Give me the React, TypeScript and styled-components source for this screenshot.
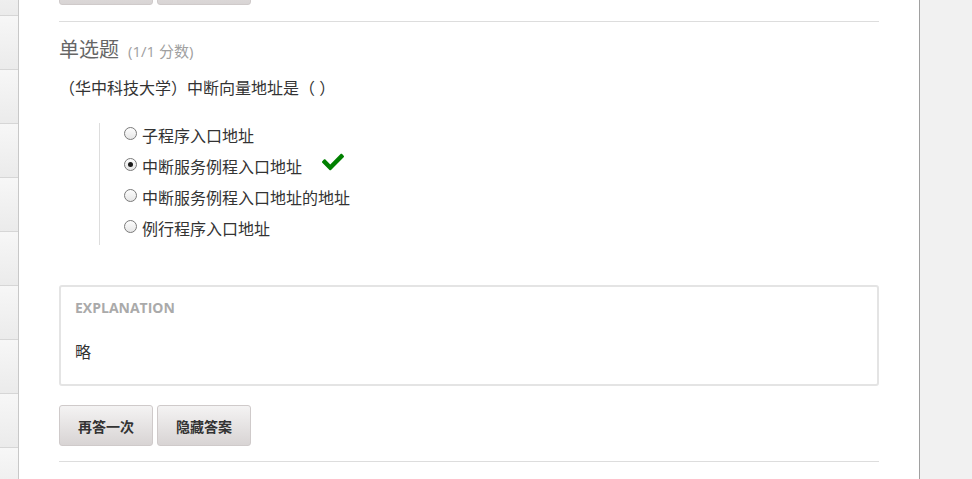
import React from "react";
import styled, { createGlobalStyle } from "styled-components";
import { FaCheck } from "react-icons/fa";

const Global = createGlobalStyle`
  html, body { margin: 0; padding: 0; height: 479px; overflow: hidden; background: #fff; }
  body { font-family: "Open Sans", "Noto Sans CJK SC", sans-serif; color: #333; }
`;

const Page = styled.div`
  display: flex;
  height: 479px;
  overflow: hidden;
`;

const Sidebar = styled.div`
  width: 18px;
  flex: none;
  border-right: 1px solid #c8c8c8;
  display: flex;
  flex-direction: column;
  overflow: hidden;
`;

const SideCell = styled.div<{ $first?: boolean }>`
  flex: none;
  height: 53px;
  margin-top: ${(p) => (p.$first ? "-38px" : "0")};
  border-bottom: 1px solid #d6d6d6;
  background: linear-gradient(#f7f7f7, #ebebeb);
`;

const Main = styled.div`
  width: 820px;
  flex: none;
  padding: 0 40px;
  background: #fff;
  border-right: 1px solid #a0a0a0;
  display: flex;
  flex-direction: column;
  overflow: hidden;
`;

const Gutter = styled.div`
  flex: 1;
  background: #f1f1f1;
`;

const ButtonRow = styled.div<{ $top?: boolean }>`
  display: flex;
  gap: 4px;
  margin-top: ${(p) => (p.$top ? "-36px" : "19px")};
`;

const Button = styled.button`
  width: 94px;
  height: 41px;
  box-sizing: border-box;
  border: 1px solid #cfcaca;
  border-radius: 3px;
  background: linear-gradient(#f4f3f3, #d8d4d4);
  font-family: "Open Sans", "Noto Sans CJK SC", sans-serif;
  font-size: 14px;
  font-weight: 700;
  color: #333;
  padding: 0;
  cursor: pointer;
`;

const Divider = styled.hr<{ $gap: number }>`
  margin: ${(p) => p.$gap}px 0 0;
  border: none;
  border-top: 1px solid #ddd;
  flex: none;
`;

const Heading = styled.h2`
  margin: 14px 0 0;
  font-size: 20px;
  line-height: 28px;
  font-weight: 400;
  color: #666;
  display: flex;
  align-items: baseline;
  gap: 9px;
`;

const Score = styled.span`
  font-size: 15px;
  color: #a0a0a0;
`;

const Question = styled.p`
  margin: 11px 0 0;
  font-size: 16px;
  line-height: 24px;
  color: #333;
`;

const OptionList = styled.div`
  margin: 23px 0 0 40px;
  padding: 1px 0 4px 24px;
  border-left: 1px solid #ddd;
  display: flex;
  flex-direction: column;
  gap: 7px;
`;

const OptionRow = styled.label`
  display: flex;
  align-items: flex-start;
  font-size: 16px;
  line-height: 24px;
  height: 24px;
  color: #333;
`;

const Radio = styled.span<{ $checked?: boolean }>`
  width: 11px;
  height: 11px;
  flex: none;
  margin: 3px 5px 0 0;
  border: 1px solid #7a7a7a;
  border-radius: 50%;
  background: linear-gradient(#fdfdfd, #e6e6e6);
  display: flex;
  align-items: center;
  justify-content: center;
  &::after {
    content: "";
    width: 5px;
    height: 5px;
    border-radius: 50%;
    background: ${(p) => (p.$checked ? "#1a1a1a" : "transparent")};
  }
`;

const Correct = styled.span`
  margin-left: 20px;
  color: #008000;
  display: flex;
  align-items: center;
  height: 24px;
  margin-top: -5px;
`;

const Explanation = styled.div`
  margin-top: 40px;
  border: 2px solid #e4e4e4;
  border-radius: 3px;
  padding: 12px 15px 20px 14px;
`;

const ExplTitle = styled.div`
  font-size: 14px;
  line-height: 18px;
  font-weight: 700;
  color: #aaa;
`;

const ExplBody = styled.div`
  margin-top: 23px;
  font-size: 16px;
  line-height: 24px;
  color: #333;
`;

const options = [
  { text: "子程序入口地址", checked: false, correct: false },
  { text: "中断服务例程入口地址", checked: true, correct: true },
  { text: "中断服务例程入口地址的地址", checked: false, correct: false },
  { text: "例行程序入口地址", checked: false, correct: false },
];

export default function App() {
  return (
    <>
      <Global />
      <Page>
        <Sidebar>
          {Array.from({ length: 10 }).map((_, i) => (
            <SideCell key={i} $first={i === 0} />
          ))}
        </Sidebar>
        <Main>
          <ButtonRow $top>
            <Button>再答一次</Button>
            <Button>隐藏答案</Button>
          </ButtonRow>
          <Divider $gap={16} />
          <Heading>
            单选题<Score>(1/1 分数)</Score>
          </Heading>
          <Question>（华中科技大学）中断向量地址是（ ）</Question>
          <OptionList>
            {options.map((o) => (
              <OptionRow key={o.text}>
                <Radio $checked={o.checked} />
                {o.text}
                {o.correct && (
                  <Correct>
                    <FaCheck size={22} />
                  </Correct>
                )}
              </OptionRow>
            ))}
          </OptionList>
          <Explanation>
            <ExplTitle>EXPLANATION</ExplTitle>
            <ExplBody>略</ExplBody>
          </Explanation>
          <ButtonRow>
            <Button>再答一次</Button>
            <Button>隐藏答案</Button>
          </ButtonRow>
          <Divider $gap={15} />
        </Main>
        <Gutter />
      </Page>
    </>
  );
}
